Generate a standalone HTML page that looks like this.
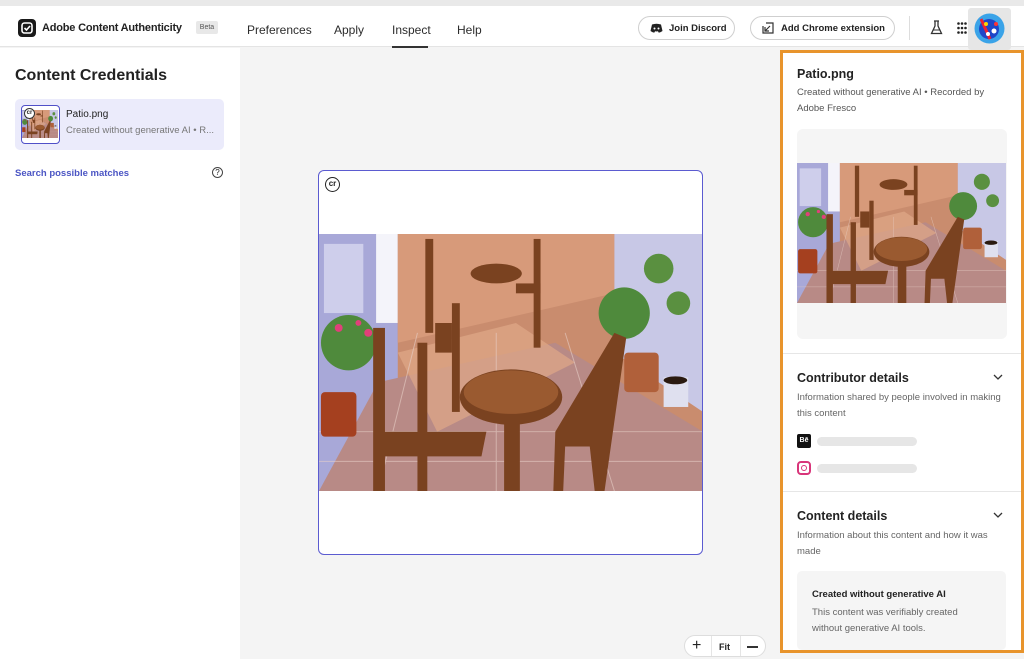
<!DOCTYPE html>
<html><head><meta charset="utf-8"><style>
*{box-sizing:border-box;margin:0;padding:0}
body{width:1024px;height:659px;overflow:hidden;font-family:"Liberation Sans",sans-serif;background:#f4f4f4;position:relative;color:#222}
.top{position:absolute;left:0;top:0;width:1024px;height:6px;background:#e9e9e9}
.hdr{position:absolute;left:0;top:6px;width:1024px;height:41px;background:#fff;border-bottom:1px solid #e4e4e4}
.abs{position:absolute;white-space:nowrap}
.nav{font-size:12px;color:#2c2c2c;top:23px}
.btn{position:absolute;top:16px;height:24px;border:1px solid #cfcfcf;border-radius:12px;font-size:9.5px;font-weight:bold;display:flex;align-items:center;padding-left:11px;background:#fff;white-space:nowrap}
.left{position:absolute;left:0;top:48px;width:240px;height:611px;background:#fff}
.panel{position:absolute;left:780px;top:50px;width:244px;height:603px;border:3px solid #e8942c;background:#fff}
.sub{font-size:9.5px;color:#666;line-height:15.5px;white-space:normal}
.h2{font-size:12.5px;font-weight:bold;color:#222}
</style></head><body>
<svg width="0" height="0" style="position:absolute">
<defs>
<symbol id="patio" viewBox="0 0 390 260" preserveAspectRatio="none">
<rect width="390" height="260" fill="#c98c6e"/>
<polygon points="0,0 80,0 80,260 0,260" fill="#a8a8d8"/>
<rect x="58" y="0" width="22" height="90" fill="#f4f4fa"/>
<polygon points="80,0 300,0 300,60 80,110" fill="#d79a7a"/>
<polygon points="300,0 390,0 390,180 300,120" fill="#c8c8e6"/>
<polygon points="60,150 240,110 390,200 390,260 0,260" fill="#b88a86"/>
<polygon points="80,120 200,90 260,130 120,200" fill="#e0a888" opacity=".7"/>
<g stroke="#e8d0c8" stroke-width="1" opacity=".6"><line x1="0" y1="200" x2="390" y2="200"/><line x1="0" y1="230" x2="390" y2="230"/><line x1="100" y1="100" x2="60" y2="260"/><line x1="250" y1="100" x2="300" y2="260"/><line x1="180" y1="100" x2="180" y2="260"/></g>
<rect x="5" y="10" width="40" height="70" fill="#e8e8f8" opacity=".6"/>
<circle cx="30" cy="110" r="28" fill="#4f8a3c"/><circle cx="20" cy="95" r="4" fill="#e0407a"/><circle cx="50" cy="100" r="4" fill="#e0407a"/><circle cx="40" cy="90" r="3" fill="#e0407a"/>
<rect x="2" y="160" width="36" height="45" rx="4" fill="#a5401f"/>
<circle cx="310" cy="80" r="26" fill="#4f8a3c"/><circle cx="345" cy="35" r="15" fill="#5a9040"/><circle cx="365" cy="70" r="12" fill="#5a9040"/>
<rect x="310" y="120" width="35" height="40" rx="4" fill="#b0603a"/>
<rect x="350" y="145" width="25" height="30" fill="#dfe0ef"/><ellipse cx="362" cy="148" rx="12" ry="4" fill="#2a1a10"/>
<g fill="#7a4220">
<rect x="55" y="95" width="12" height="165"/><rect x="100" y="110" width="10" height="150"/><polygon points="60,200 170,200 165,225 62,225"/>
<rect x="108" y="5" width="8" height="95"/><rect x="135" y="70" width="8" height="110"/>
<rect x="218" y="5" width="7" height="110"/>
<ellipse cx="195" cy="165" rx="52" ry="28"/><rect x="188" y="180" width="16" height="80"/>
<ellipse cx="180" cy="40" rx="26" ry="10"/>
<polygon points="240,200 300,100 312,105 290,260 280,260 275,215 250,215 248,260 238,260"/>
<polygon points="118,90 135,90 135,120 118,120"/>
<rect x="200" y="50" width="25" height="10"/>
</g>
<ellipse cx="195" cy="160" rx="48" ry="22" fill="#9a5a30"/>
</symbol>
</defs></svg>
<div class="top"></div>
<div class="hdr"></div>
<svg class="abs" style="left:18px;top:19px" width="18" height="18" viewBox="0 0 18 18"><rect width="18" height="18" rx="4" fill="#1a1a1a"/><rect x="4" y="4" width="10" height="10" rx="2.5" fill="none" stroke="#fff" stroke-width="1.6"/><path d="M6.5 9l2 2 3.5-4" fill="none" stroke="#fff" stroke-width="1.6"/></svg>
<div class="abs" style="left:42px;top:22px;font-size:11px;font-weight:bold;letter-spacing:-0.2px">Adobe Content Authenticity</div>
<div class="abs" style="left:196px;top:21px;width:22px;height:13px;background:#e8e8e8;border-radius:2px;font-size:7px;color:#555;text-align:center;line-height:13px">Beta</div>
<div class="abs nav" style="left:247px">Preferences</div>
<div class="abs nav" style="left:334px">Apply</div>
<div class="abs nav" style="left:392px">Inspect</div>
<div class="abs" style="left:392px;top:46px;width:36px;height:2px;background:#333"></div>
<div class="abs nav" style="left:457px">Help</div>
<div class="btn" style="left:638px;width:97px"><svg width="13" height="10" viewBox="0 0 13 10"><path d="M2 1.5Q6.5 0 11 1.5L12.5 8Q10 9.8 8.5 9.5L8 8.3Q6.5 8.7 5 8.3L4.5 9.5Q3 9.8 .5 8Z" fill="#222"/><circle cx="4.5" cy="5.5" r="1" fill="#fff"/><circle cx="8.5" cy="5.5" r="1" fill="#fff"/></svg><span style="margin-left:6px">Join Discord</span></div>
<div class="btn" style="left:750px;width:145px"><svg width="12" height="12" viewBox="0 0 12 12"><path d="M4 1h7v7M11 8v3H4M1 4v7h3" fill="none" stroke="#333" stroke-width="1.2"/><path d="M8 4L3 9M3 5v4h4" fill="none" stroke="#333" stroke-width="1.2"/></svg><span style="margin-left:7px">Add Chrome extension</span></div>
<div class="abs" style="left:909px;top:16px;width:1px;height:24px;background:#ddd"></div>
<svg class="abs" style="left:930px;top:20px" width="13" height="15" viewBox="0 0 13 15"><path d="M4 1h5M5 1v5L1.5 13.5h10L8 6V1" fill="none" stroke="#333" stroke-width="1.3"/><path d="M3 10h7" stroke="#333"/></svg>
<svg class="abs" style="left:957px;top:22px" width="10" height="12" viewBox="0 0 10 12"><g fill="#222"><circle cx="1.5" cy="1.5" r="1.3"/><circle cx="5" cy="1.5" r="1.3"/><circle cx="8.5" cy="1.5" r="1.3"/><circle cx="1.5" cy="6" r="1.3"/><circle cx="5" cy="6" r="1.3"/><circle cx="8.5" cy="6" r="1.3"/><circle cx="1.5" cy="10.5" r="1.3"/><circle cx="5" cy="10.5" r="1.3"/><circle cx="8.5" cy="10.5" r="1.3"/></g></svg>
<div class="abs" style="left:968px;top:8px;width:43px;height:42px;background:#e6e6e6;border-radius:3px"></div>
<svg class="abs" style="left:974px;top:13px" width="31" height="31" viewBox="0 0 31 31"><circle cx="15.5" cy="15.5" r="15" fill="#3aa3e8"/><circle cx="15" cy="16" r="10" fill="#1e46c8"/><path d="M7 6l9 20" stroke="#e23" stroke-width="3"/><circle cx="20" cy="18" r="2.5" fill="#fff"/><circle cx="14" cy="21" r="2" fill="#fff"/><circle cx="22" cy="11" r="2" fill="#f33"/><circle cx="12" cy="11" r="2" fill="#ffd400"/></svg>

<div class="left">
<div class="abs" style="left:15px;top:19px;font-size:16px;font-weight:bold">Content Credentials</div>
<div class="abs" style="left:15px;top:51px;width:209px;height:51px;background:#ebebfb;border-radius:5px"></div>
<div class="abs" style="left:21px;top:57px;width:39px;height:39px;border:1.5px solid #5050c8;border-radius:4px;overflow:hidden;background:#fff"><svg width="36" height="36" style="display:block"><use href="#patio" x="0" y="4" width="36" height="28"/></svg></div>
<div class="abs" style="left:24px;top:60px;width:11px;height:11px;border-radius:50%;background:#fff;border:1px solid #333;font-size:6px;text-align:center;line-height:9px;font-weight:bold">cr</div>
<div class="abs" style="left:66px;top:61px;font-size:10px">Patio.png</div>
<div class="abs" style="left:66px;top:77px;font-size:9.5px;color:#777">Created without generative AI • R...</div>
<div class="abs" style="left:15px;top:120px;font-size:9.5px;font-weight:bold;color:#4b55c4">Search possible matches</div>
<div class="abs" style="left:212px;top:119px;width:11px;height:11px;border:1px solid #444;border-radius:50%;font-size:8px;text-align:center;line-height:9px">?</div>
</div>

<div class="abs" style="left:318px;top:170px;width:385px;height:385px;background:#fff;border:1.5px solid #5b5bd0;border-radius:6px;overflow:hidden">
<div class="abs" style="left:6px;top:6px;width:15px;height:15px;border-radius:50%;border:1.5px solid #222;font-size:8px;font-weight:bold;text-align:center;line-height:12px">cr</div>
<svg class="abs" style="left:0;top:63px" width="384" height="257"><use href="#patio" width="384" height="257"/></svg>
</div>

<div class="abs" style="left:684px;top:635px;width:82px;height:22px;background:#fff;border:1px solid #ddd;border-radius:11px;font-size:9px;font-weight:bold">
<span class="abs" style="left:7px;top:1px;font-size:16px;font-weight:normal">+</span>
<span class="abs" style="left:26px;top:0;width:1px;height:20px;background:#e5e5e5"></span>
<span class="abs" style="left:34px;top:6px">Fit</span>
<span class="abs" style="left:55px;top:0;width:1px;height:20px;background:#e5e5e5"></span>
<span class="abs" style="left:62px;top:10px;width:11px;height:1.5px;background:#333"></span>
</div>

<div class="panel">
<div class="abs" style="left:14px;top:14px;font-size:12.5px;font-weight:bold">Patio.png</div>
<div class="abs sub" style="left:14px;top:32px;width:210px;color:#555">Created without generative AI • Recorded by Adobe Fresco</div>
<div class="abs" style="left:14px;top:76px;width:210px;height:210px;background:#f5f5f5;border-radius:6px"></div>
<svg class="abs" style="left:14px;top:110px" width="209" height="140"><use href="#patio" width="209" height="140"/></svg>
<div class="abs" style="left:0;top:300px;width:238px;height:1px;background:#e6e6e6"></div>
<div class="abs h2" style="left:14px;top:318px">Contributor details</div>
<svg class="abs" style="left:210px;top:321px" width="10" height="7"><path d="M1 1l4 4 4-4" fill="none" stroke="#333" stroke-width="1.3"/></svg>
<div class="abs sub" style="left:14px;top:337px;width:215px">Information shared by people involved in making this content</div>
<div class="abs" style="left:14px;top:381px;width:14px;height:14px;background:#111;border-radius:2px;color:#fff;font-size:7px;font-weight:bold;text-align:center;line-height:14px">Bē</div>
<div class="abs" style="left:34px;top:384px;width:100px;height:9px;background:#e6e6e6;border-radius:5px"></div>
<div class="abs" style="left:14px;top:408px;width:14px;height:14px;border:2px solid #d8357a;border-radius:4px"><div style="margin:2px auto;width:6px;height:6px;border:1.5px solid #d8357a;border-radius:50%"></div></div>
<div class="abs" style="left:34px;top:411px;width:100px;height:9px;background:#e6e6e6;border-radius:5px"></div>
<div class="abs" style="left:0;top:438px;width:238px;height:1px;background:#e6e6e6"></div>
<div class="abs h2" style="left:14px;top:456px">Content details</div>
<svg class="abs" style="left:210px;top:459px" width="10" height="7"><path d="M1 1l4 4 4-4" fill="none" stroke="#333" stroke-width="1.3"/></svg>
<div class="abs sub" style="left:14px;top:475px;width:210px">Information about this content and how it was made</div>
<div class="abs" style="left:14px;top:518px;width:209px;height:79px;background:#f5f5f5;border-radius:5px"></div>
<div class="abs" style="left:29px;top:536px;font-size:9.5px;font-weight:bold">Created without generative AI</div>
<div class="abs sub" style="left:29px;top:552px;width:170px">This content was verifiably created without generative AI tools.</div>
</div>
</body></html>
